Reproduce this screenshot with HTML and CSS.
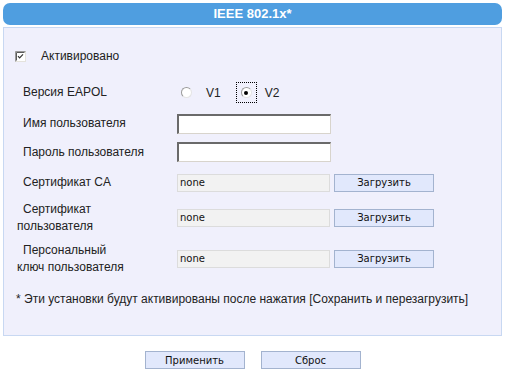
FILE: index.html
```html
<!DOCTYPE html>
<html lang="ru">
<head>
  <meta charset="UTF-8">
  <title>IEEE 802.1x</title>
  <link rel="stylesheet" href="styles.css">
</head>
<body>
  <div class="page">
    <div class="title">IEEE 802.1x*</div>

    <div class="panel">
      <div class="form">
        <div class="enable">
          <span class="check">
            <svg width="11" height="11" viewBox="0 0 11 11">
              <rect x="0.5" y="0.5" width="10" height="10" fill="#fff" stroke="#e4e2dc"/>
              <path d="M0.5 10.5V0.5H10.5" fill="none" stroke="#9a9a9a"/>
              <path d="M1.5 9.5V1.5H9.5" fill="none" stroke="#5a5a5a"/>
              <path d="M3 5.2L4.6 6.8L8 3.4" fill="none" stroke="#333" stroke-width="1.2"/>
            </svg>
          </span>
          <span>Активировано</span>
        </div>

        <div class="label">Версия EAPOL</div>
        <div class="ctrl radios">
          <span class="radio"></span>
          <span class="radio-text">V1</span>
          <span class="focus"><span class="radio checked"></span></span>
          <span class="radio-text v2">V2</span>
        </div>

        <div class="label">Имя пользователя</div>
        <div class="ctrl"><input class="text" type="text"></div>

        <div class="label">Пароль пользователя</div>
        <div class="ctrl"><input class="text" type="password"></div>

        <div class="label">Сертификат CA</div>
        <div class="ctrl file">
          <span class="field">none</span>
          <button class="btn">Загрузить</button>
        </div>

        <div class="label">Сертификат<br>пользователя</div>
        <div class="ctrl file">
          <span class="field">none</span>
          <button class="btn">Загрузить</button>
        </div>

        <div class="label">Персональный<br>ключ пользователя</div>
        <div class="ctrl file">
          <span class="field">none</span>
          <button class="btn">Загрузить</button>
        </div>

        <div class="note">* Эти установки будут активированы после нажатия [Сохранить и перезагрузить]</div>
      </div>
    </div>

    <div class="actions">
      <button class="btn">Применить</button>
      <button class="btn">Сброс</button>
    </div>
  </div>
</body>
</html>
```

FILE: styles.css
```css
* {
  margin: 0;
  padding: 0;
  box-sizing: border-box;
}

body {
  font-family: 'Liberation Sans', Arial, sans-serif;
  font-size: 12px;
  color: #222;
  background: #fff;
}

.page {
  width: 499px;
  margin: 3px 0 0 3px;
}

.title {
  height: 22px;
  line-height: 22px;
  background: #4f9ee0;
  border-radius: 7px;
  color: #fff;
  font-size: 13px;
  font-weight: bold;
  text-align: center;
}

.panel {
  margin-top: 2px;
  background: #f0f0fc;
  border: 1px solid #c8d8f2;
  padding: 9px 10px 17px;
}

.form {
  display: grid;
  grid-template-columns: 163px 1fr;
  grid-template-rows: 38px 35px 27px 30px 31px 39px 43px 38px;
  align-items: center;
}

.enable {
  grid-column: 1 / -1;
  display: flex;
  align-items: center;
  padding-left: 1px;
}

.check {
  display: flex;
  width: 11px;
  height: 11px;
  margin-right: 15px;
}

.label {
  padding-left: 3px;
  text-indent: 6px;
  line-height: 17px;
}

.ctrl {
  display: flex;
  align-items: center;
}

.radios {
  padding-left: 4px;
}

.radio {
  display: inline-block;
  width: 11px;
  height: 11px;
  border-radius: 50%;
  border: 1px solid;
  border-color: #9a9a9a #e4e4e4 #e4e4e4 #9a9a9a;
  background: #fff;
  position: relative;
}

.radio.checked::after {
  content: "";
  position: absolute;
  left: 2.5px;
  top: 2.5px;
  width: 4px;
  height: 4px;
  border-radius: 50%;
  background: #000;
}

.radio-text {
  margin-left: 14px;
}

.focus {
  display: flex;
  padding: 4px;
  margin-left: 15px;
  border: 1px dotted #000;
}

.radio-text.v2 {
  margin-left: 8px;
}

.text {
  width: 154px;
  height: 20px;
  background: #fff;
  border-style: solid;
  border-width: 2px 1px 1px 2px;
  border-color: #6a6a6a #d8d4cc #d8d4cc #6a6a6a;
  outline: none;
}

.field {
  width: 153px;
  height: 18px;
  line-height: 16px;
  padding-left: 2px;
  background: #f2f2f2;
  border: 1px solid #dcdcdc;
  font-family: 'DejaVu Sans', Tahoma, sans-serif;
  font-size: 10px;
  color: #111;
}

.btn {
  width: 100px;
  height: 18px;
  background: #e1e8fc;
  border: 1px solid #a3b3cf;
  font-family: 'DejaVu Sans', Tahoma, sans-serif;
  font-size: 10px;
  color: #111;
}

.file .btn {
  margin-left: 4px;
}

.note {
  grid-column: 1 / -1;
  padding-left: 2px;
}

.actions {
  display: flex;
  justify-content: center;
  gap: 16px;
  margin-top: 15px;
}
```
